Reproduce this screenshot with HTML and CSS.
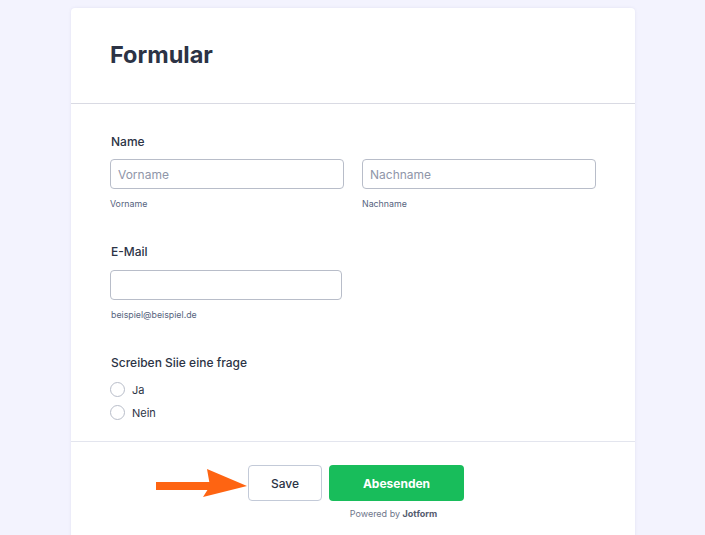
FILE: index.html
```html
<!DOCTYPE html>
<html lang="de">
<head>
  <meta charset="UTF-8">
  <meta name="viewport" content="width=device-width, initial-scale=1.0">
  <title>Formular</title>
  <link rel="stylesheet" href="styles.css">
</head>
<body>
  <div class="form-card">
    <div class="form-header">
      <h1>Formular</h1>
    </div>

    <div class="form-body">
      <div class="form-group">
        <label class="form-label">Name</label>
        <div class="name-row">
          <div class="name-col">
            <input type="text" placeholder="Vorname">
            <div class="sublabel">Vorname</div>
          </div>
          <div class="name-col">
            <input type="text" placeholder="Nachname">
            <div class="sublabel">Nachname</div>
          </div>
        </div>
      </div>

      <div class="form-group">
        <label class="form-label">E-Mail</label>
        <input type="email" class="email-input">
        <div class="sublabel">beispiel@beispiel.de</div>
      </div>

      <div class="form-group">
        <label class="form-label">Screiben Siie eine frage</label>
        <div class="radio-list">
          <label class="radio-option"><span class="radio"></span>Ja</label>
          <label class="radio-option"><span class="radio"></span>Nein</label>
        </div>
      </div>
    </div>

    <div class="form-footer">
      <svg class="pointer" width="93" height="30" viewBox="0 0 93 30">
        <rect x="1" y="14" width="56" height="8" fill="#fe6412"/>
        <polygon points="52,1 92,18 48,29 55,18" fill="#fe6412"/>
      </svg>
      <div class="buttons">
        <button class="btn-save">Save</button>
        <div class="submit-col">
          <button class="btn-submit">Abesenden</button>
          <div class="powered">Powered by <b>Jotform</b></div>
        </div>
      </div>
    </div>
  </div>
</body>
</html>
```

FILE: styles.css
```css
body {
  margin: 0;
  background-color: #f3f3fe;
  font-family: Inter, "Noto Sans", sans-serif;
  color: #2c3345;
}
.form-card {
  width: 564px;
  margin: 8px 0 0 71px;
  background: #fff;
  border-radius: 4px 4px 0 0;
  box-shadow: 0 0 3px rgba(100, 100, 160, 0.12);
  min-height: 540px;
}
.form-header {
  padding: 32px 39px 33px;
  border-bottom: 1px solid #d9dae3;
}
.form-header h1 {
  margin: 0;
  font-size: 23.5px;
  line-height: 30px;
  font-weight: 700;
  color: #2c3345;
}
.form-body {
  padding: 29px 39px 17px 40px;
}
.form-group {
  margin-bottom: 32px;
}
.form-group:last-child {
  margin-bottom: 0;
}
.form-label {
  display: block;
  font-size: 12px;
  line-height: 18px;
  font-weight: 500;
  margin-bottom: 8px;
}
.name-row {
  display: flex;
  gap: 18px;
  margin-left: -1px;
}
.name-col {
  width: 234px;
}
input {
  width: 100%;
  height: 30px;
  box-sizing: border-box;
  border: 1px solid #b8bdc9;
  border-radius: 4px;
  padding: 0 7px;
  font-family: inherit;
  font-size: 12px;
  color: #2c3345;
}
input::placeholder {
  color: #8f96a9;
}
.email-input {
  width: 232px;
  margin-left: -1px;
  margin-top: 1px;
}
.sublabel {
  margin-top: 8px;
  font-size: 8.8px;
  line-height: 14px;
  color: #57647e;
}
/* collapses with the label's 8px margin, leaving 6px */
.radio-list {
  margin-top: -2px;
  margin-left: -1px;
}
.radio-option {
  display: flex;
  align-items: center;
  height: 23px;
  font-size: 11px;
}
.radio {
  width: 15px;
  height: 15px;
  box-sizing: border-box;
  border: 1px solid #b8bdc9;
  border-radius: 50%;
  margin-right: 7px;
}
.form-footer {
  position: relative;
  border-top: 1px solid #e3e5ee;
  padding-top: 23px;
}
.pointer {
  position: absolute;
  left: 84px;
  top: 26px;
}
.buttons {
  display: flex;
  gap: 7px;
  padding-left: 177px;
}
button {
  height: 36px;
  border-radius: 4px;
  font-family: inherit;
  font-size: 12px;
  cursor: pointer;
}
.btn-save {
  width: 74px;
  background: #fff;
  border: 1px solid #c3cad8;
  color: #2c3345;
  font-weight: 500;
}
.btn-submit {
  width: 135px;
  background-color: #18bd5b;
  border: none;
  color: #fff;
  font-weight: 700;
}
.powered {
  margin-top: 7px;
  padding-right: 6px;
  text-align: center;
  font-size: 9px;
  color: #6f768b;
}
.powered b {
  color: #555c6f;
}
```
